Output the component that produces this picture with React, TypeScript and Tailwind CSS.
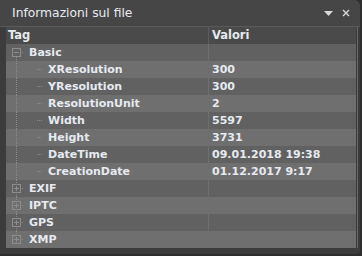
import React from "react";

type Row = {
  tag: string;
  value?: string;
  kind: "open" | "child" | "closed";
  last?: boolean;
};

const rows: Row[] = [
  { tag: "Basic", kind: "open" },
  { tag: "XResolution", value: "300", kind: "child" },
  { tag: "YResolution", value: "300", kind: "child" },
  { tag: "ResolutionUnit", value: "2", kind: "child" },
  { tag: "Width", value: "5597", kind: "child" },
  { tag: "Height", value: "3731", kind: "child" },
  { tag: "DateTime", value: "09.01.2018 19:38", kind: "child" },
  { tag: "CreationDate", value: "01.12.2017 9:17", kind: "child" },
  { tag: "EXIF", kind: "closed" },
  { tag: "IPTC", kind: "closed" },
  { tag: "GPS", kind: "closed" },
  { tag: "XMP", kind: "closed", last: true },
];

const dot = "#8c8c8c";

// tree lines + expander boxes, coordinates relative to the tag cell
function TreeGlyph({ row, index }: { row: Row; index: number }) {
  const vTop = index === 0 ? 13 : 0;
  const vBottom = row.last ? 4 : 17;
  const isGroup = row.kind !== "child";
  return (
    <svg width={isGroup ? 18 : 36} height={17} className="shrink-0">
      <line x1={10.5} y1={vTop} x2={10.5} y2={vBottom} stroke={dot} strokeDasharray="1 1" />
      {isGroup ? (
        <>
          <rect x={6.5} y={4.5} width={8} height={8} fill="none" stroke={dot} />
          <line x1={8} y1={8.5} x2={13} y2={8.5} stroke={dot} />
          {row.kind === "closed" && <line x1={10.5} y1={6} x2={10.5} y2={11} stroke={dot} />}
          <line x1={16} y1={8.5} x2={21} y2={8.5} stroke={dot} strokeDasharray="1 1" />
        </>
      ) : (
        <line x1={31} y1={8.5} x2={40} y2={8.5} stroke={dot} strokeDasharray="1 1" />
      )}
    </svg>
  );
}

export default function App() {
  return (
    <div
      className="w-[362px] h-[256px] bg-[#2e2e2e] text-[#e6eaf0] overflow-hidden"
      style={{ fontFamily: '"DejaVu Sans", Verdana, sans-serif' }}
    >
      <div className="w-[360px] h-[254px] bg-[#3c3c3c] rounded-tr-[6px] rounded-br-[3px] flex flex-col">
        <div className="h-[27px] bg-[#464646] rounded-tr-[6px] flex items-center justify-between pl-[12px] pr-[10px] border-b border-[#5a5a5a]">
          <span className="text-[12.3px] leading-none">Informazioni sul file</span>
          <div className="flex items-center gap-[9px]">
            <svg width="9" height="5">
              <polygon points="0,0 9,0 4.5,5" fill="#d8d8d8" />
            </svg>
            <svg width="8" height="8">
              <path d="M1 1 L7 7 M7 1 L1 7" stroke="#d8d8d8" strokeWidth="1.4" />
            </svg>
          </div>
        </div>
        <div className="flex pl-[6px] pr-[1px]">
          <div className="flex-1 flex flex-col">
            <div className="h-[17px] bg-[#4a4a4a] flex text-[11.5px] font-bold leading-none">
              <div className="w-[203px] border-r border-[#5c5c5c] flex items-center pl-[2px]">Tag</div>
              <div className="flex-1 flex items-center pl-[3px]">Valori</div>
            </div>
            {rows.map((r, i) => (
              <div
                key={r.tag}
                className={`h-[17px] flex text-[11px] font-bold leading-none ${
                  i % 2 === 0 ? "bg-[#616161]" : "bg-[#6f6f6f]"
                }`}
              >
                <div className="w-[203px] border-r border-[#6f6f6f] flex items-center">
                  <TreeGlyph row={r} index={i} />
                  <span className={r.kind === "child" ? "ml-[6px]" : "ml-[5px]"}>{r.tag}</span>
                </div>
                <div className="flex-1 flex items-center pl-[3px]">{r.value}</div>
              </div>
            ))}
          </div>
          <div className="w-[3px] flex">
            <div className="w-[1px]" />
            <div className="w-[1px] bg-[#666666]" />
          </div>
        </div>
      </div>
    </div>
  );
}
